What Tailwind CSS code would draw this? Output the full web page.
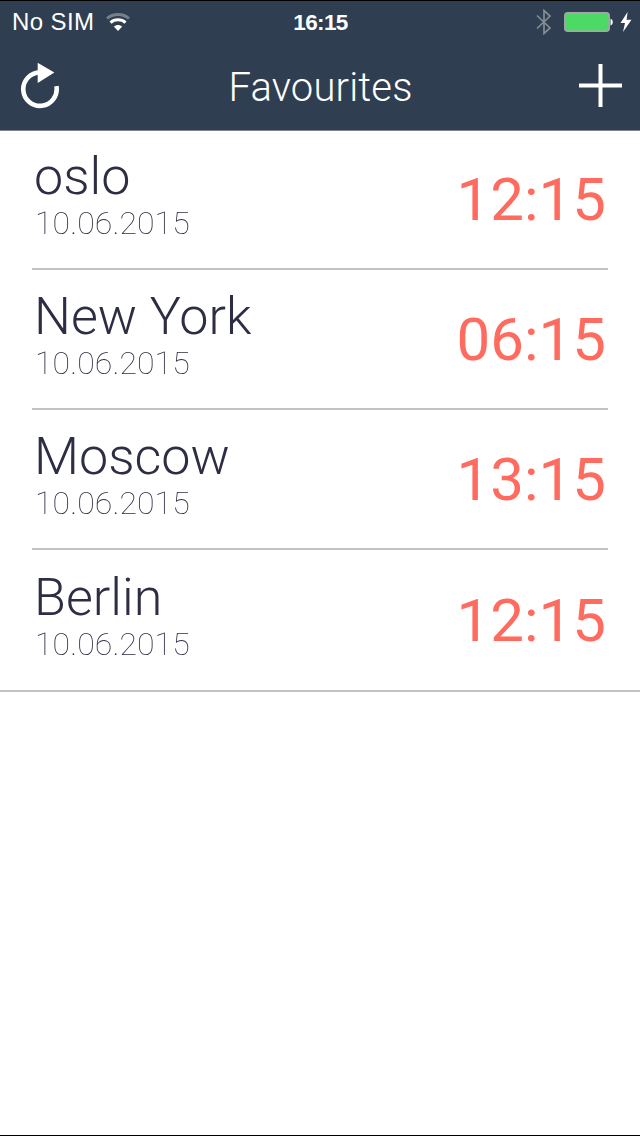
<!DOCTYPE html>
<html lang="en">
<head>
  <meta charset="UTF-8" />
  <meta name="viewport" content="width=device-width, initial-scale=1.0"/>
  <title>Favourites</title>
  <script src="https://cdn.jsdelivr.net/npm/@tailwindcss/browser@4"></script>
</head>
<body class="bg-white h-[1136px] flex flex-col overflow-hidden border-t border-b border-black font-['Roboto',sans-serif]">

  <!-- Header -->
  <header class="h-[130px] shrink-0 bg-[#2f3e50] text-white border-b border-[#7b858f]">

    <!-- Status bar -->
    <div class="h-10 grid grid-cols-3 items-center pl-3 pr-2 font-['Liberation_Sans',sans-serif] text-2xl leading-10">
      <div class="flex items-center gap-3">
        <span class="tracking-[0.4px] pb-px">No SIM</span>
        <svg class="w-6 h-[18px]" viewBox="0 0 24 18" fill="none" stroke="white" stroke-width="3">
          <path d="M1 5.5C7 0.2 17 0.2 23 5.5" stroke="#75808c"/>
          <path d="M4.5 9.6C8.5 5.8 15.5 5.8 19.5 9.6"/>
          <path d="M12 18L7.8 13.6C10.2 11.4 13.8 11.4 16.2 13.6Z" fill="white" stroke="none"/>
        </svg>
      </div>
      <span class="text-center font-bold text-[22.5px] tracking-[-0.6px] pt-0.5 pr-[3px]">16:15</span>
      <div class="flex items-center justify-end pb-px">
        <svg class="w-4 h-[26px]" viewBox="0 0 16 26" fill="none" stroke="#848d96" stroke-width="1.7">
          <path d="M1 6.5L14 19L8 24.5V1.5L14 7L1 19.5"/>
        </svg>
        <svg class="w-[50px] h-5 ml-3" viewBox="0 0 50 20">
          <rect x="0.8" y="0.8" width="44.4" height="18.4" rx="3" fill="#4cd964" stroke="#a9a4b0" stroke-width="1.5"/>
          <path d="M46.5 6.8C49.5 7.4 49.5 12.8 46.5 13.4Z" fill="white"/>
        </svg>
        <svg class="w-3 h-5 ml-1.5" viewBox="0 0 12 20" fill="white">
          <path d="M7.6 0L0.5 11H5L3 20L11.5 7.8H6.6Z"/>
        </svg>
      </div>
    </div>

    <!-- Nav bar -->
    <nav class="h-[89px] flex items-center justify-between pl-5 pr-[17px]">
      <svg class="w-10 h-[46px]" viewBox="0 0 40 46">
        <path d="M20 9.5A16.7 16.7 0 1 0 36.4 23.2" fill="none" stroke="white" stroke-width="4.6"/>
        <path d="M17.7 -0.2L34.4 9.6L17.7 20Z" fill="white"/>
      </svg>
      <h1 class="text-[40px] leading-none font-light tracking-[0.15px] pt-1 pl-0.5">Favourites</h1>
      <svg class="w-11 h-11" viewBox="0 0 44 44" stroke="white" stroke-width="4">
        <path d="M21.5 0V43M0 21.5H43"/>
      </svg>
    </nav>
  </header>

  <!-- City list -->
  <ul class="border-b-2 border-[#c2c2c3] will-change-transform">
    <li class="h-[139px] mx-8 px-0.5 flex justify-between border-b-2 border-[#c2c2c3]">
      <div class="pt-4">
        <h2 class="text-[52px] leading-[60px] font-light text-[#2d2d44]">oslo</h2>
        <p class="pl-px text-[32px] leading-8 font-thin tracking-[0.1px] text-[#2d2d44]">10.06.2015</p>
      </div>
      <span class="pt-[34px] text-[60px] leading-[70px] text-[#ff6b5e]">12:15</span>
    </li>
    <li class="h-[140px] mx-8 px-0.5 flex justify-between border-b-2 border-[#c2c2c3]">
      <div class="pt-[17px]">
        <h2 class="text-[52px] leading-[60px] font-light text-[#2d2d44]">New York</h2>
        <p class="pl-px text-[32px] leading-8 font-thin tracking-[0.1px] text-[#2d2d44]">10.06.2015</p>
      </div>
      <span class="pt-[35px] text-[60px] leading-[70px] text-[#ff6b5e]">06:15</span>
    </li>
    <li class="h-[140px] mx-8 px-0.5 flex justify-between border-b-2 border-[#c2c2c3]">
      <div class="pt-[17px]">
        <h2 class="text-[52px] leading-[60px] font-light text-[#2d2d44]">Moscow</h2>
        <p class="pl-px text-[32px] leading-8 font-thin tracking-[0.1px] text-[#2d2d44]">10.06.2015</p>
      </div>
      <span class="pt-[35px] text-[60px] leading-[70px] text-[#ff6b5e]">13:15</span>
    </li>
    <li class="h-[140px] mx-8 px-0.5 flex justify-between">
      <div class="pt-[18px]">
        <h2 class="text-[52px] leading-[60px] font-light text-[#2d2d44]">Berlin</h2>
        <p class="pl-px text-[32px] leading-8 font-thin tracking-[0.1px] text-[#2d2d44]">10.06.2015</p>
      </div>
      <span class="pt-9 text-[60px] leading-[70px] text-[#ff6b5e]">12:15</span>
    </li>
  </ul>

</body>
</html>
